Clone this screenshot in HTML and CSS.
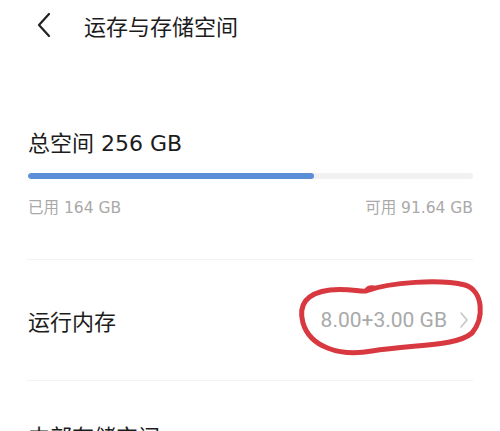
FILE: index.html
```html
<!DOCTYPE html>
<html lang="zh-CN">
<head>
    <meta charset="UTF-8">
    <meta name="viewport" content="width=device-width, initial-scale=1.0">
    <title>运存与存储空间</title>
    <link rel="stylesheet" href="styles.css">
</head>
<body>
    <div class="page">
        <!-- 顶部栏 -->
        <div class="top-bar">
            <svg class="back" width="16" height="26" viewBox="0 0 16 26">
                <path d="M13 2 L3 13 L13 24" fill="none" stroke="#222" stroke-width="2.2" stroke-linecap="round" stroke-linejoin="round"/>
            </svg>
            <span class="title">运存与存储空间</span>
        </div>

        <!-- 存储概览 -->
        <div class="storage">
            <div class="total">总空间 256 GB</div>
            <div class="bar"><div class="bar-used" style="width: 64.3%"></div></div>
            <div class="usage">
                <span>已用 164 GB</span>
                <span>可用 91.64 GB</span>
            </div>
        </div>

        <div class="divider"></div>

        <div class="row">
            <span class="row-label">运行内存</span>
            <span class="row-value">8.00+3.00 GB
                <svg class="chev" width="10" height="18" viewBox="0 0 10 18">
                    <path d="M2 2 L8 9 L2 16" fill="none" stroke="#c4c4c4" stroke-width="1.6" stroke-linecap="round" stroke-linejoin="round"/>
                </svg>
            </span>
        </div>

        <div class="divider"></div>

        <div class="row row-cut">
            <span class="row-label">内部存储空间</span>
        </div>

        <!-- 手绘红圈 -->
        <svg class="mark" width="500" height="431" viewBox="0 0 500 431">
            <path d="M366 291 C 390 282 440 279 465 285 C 484 291 484 319 472 333 C 456 347 412 344 372 351 C 340 357 310 347 303 323 C 298 305 306 293 330 290 C 348 288 360 292 366 291 C 368 288 370 287 374 288"
                  fill="none" stroke="#d8383f" stroke-width="5" stroke-linecap="round" stroke-linejoin="round"/>
        </svg>
    </div>
</body>
</html>
```

FILE: styles.css
```css
/* 全体 */
body {
    margin: 0;
    background-color: #fff;
    font-family: "DejaVu Sans", "Noto Sans CJK SC", sans-serif;
    color: #1c1c1c;
}

.page {
    position: relative;
    width: 500px;
    height: 431px;
    overflow: hidden;
}

/* 顶部栏 */
.top-bar {
    display: flex;
    align-items: center;
    height: 50px;
    padding-left: 36px;
}

.back {
    margin-right: 32px;
}

.title {
    font-size: 22px;
}

/* 存储概览 */
.storage {
    padding: 79px 27px 0 28px;
}

.total {
    font-size: 22px;
    line-height: 30px;
}

.bar {
    margin-top: 14px;
    height: 6px;
    border-radius: 3px;
    background-color: #f1f1f1;
    overflow: hidden;
}

.bar-used {
    height: 100%;
    border-radius: 3px;
    background-color: #5b8fd7;
}

.usage {
    display: flex;
    justify-content: space-between;
    margin-top: 18px;
    font-size: 15.5px;
    line-height: 22px;
    color: #a9a9a9;
}

.divider {
    height: 1px;
    margin: 0 27px;
    background-color: #f3f3f3;
}

.storage + .divider {
    margin-top: 40px;
}

/* 行 */
.row {
    display: flex;
    justify-content: space-between;
    align-items: center;
    height: 120px;
    padding: 0 31px 0 28px;
}

.row-label {
    font-size: 22px;
}

.row-value {
    display: flex;
    align-items: center;
    gap: 12px;
    font-family: Roboto, "Noto Sans CJK SC", sans-serif;
    font-size: 21px;
    color: #a9a9a9;
}

.row-cut {
    height: auto;
    padding-top: 38px;
    align-items: flex-start;
}

.mark {
    position: absolute;
    top: 0;
    left: 0;
    pointer-events: none;
}
```
